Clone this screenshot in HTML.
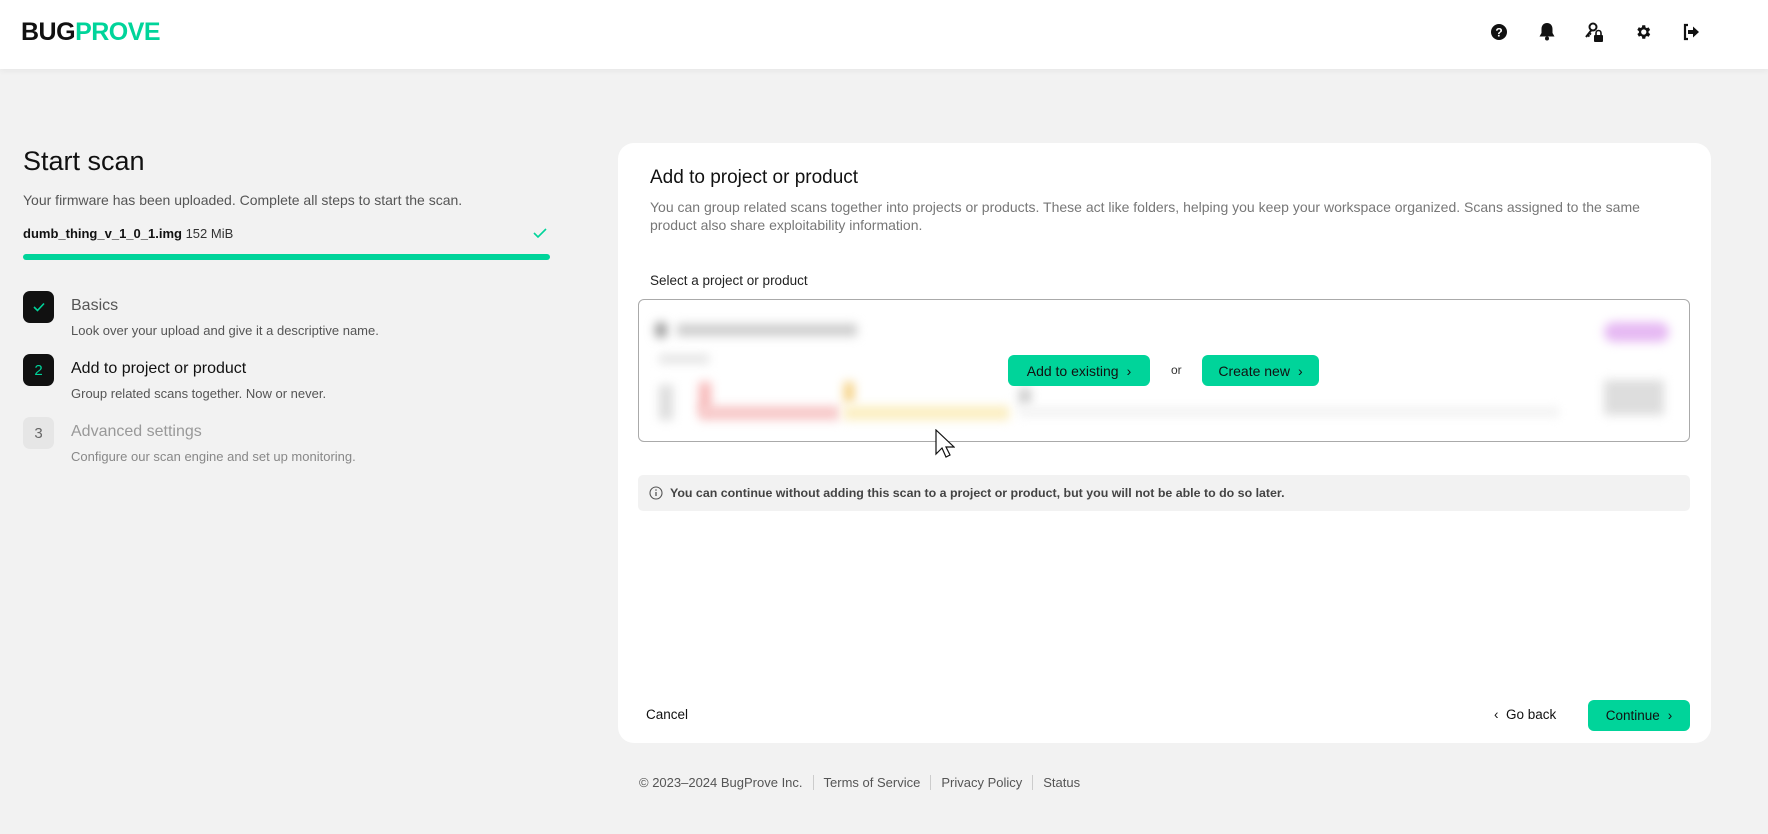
<!DOCTYPE html>
<html><head><meta charset="utf-8"><style>
*{margin:0;padding:0;box-sizing:border-box}
body{width:1768px;height:834px;background:#f2f2f2;font-family:"Liberation Sans",sans-serif;color:#111;position:relative;overflow:hidden}
.a{position:absolute;white-space:nowrap}
.hdr{position:absolute;left:0;top:0;width:1768px;height:69px;background:#fff;box-shadow:0 2px 6px rgba(0,0,0,.05)}
.card{position:absolute;left:618px;top:143px;width:1093px;height:600px;background:#fff;border-radius:16px}
.btn{position:absolute;background:#00d49a;border-radius:6px;font-size:14px;color:#111;display:flex;align-items:center;justify-content:center;gap:8px}
.box{position:absolute;left:23px;width:31px;height:32px;border-radius:7px;display:flex;align-items:center;justify-content:center;font-size:15px}
.st{font-size:16px;color:#555}
.sd{font-size:13px;color:#555}
.bl{position:absolute;filter:blur(5px)}
</style></head><body>
<div class="hdr">
<div class="a" style="left:21px;top:18px;font-size:25px;font-weight:bold;letter-spacing:-0.5px;line-height:28px"><span style="color:#111">BUG</span><span style="color:#00d49a">PROVE</span></div>
<svg class="a" style="left:1490px;top:23px" width="18" height="18" viewBox="0 0 18 18"><circle cx="9" cy="9" r="8" fill="#111"/><text x="9" y="13.5" font-size="12" font-weight="bold" fill="#fff" text-anchor="middle" font-family="Liberation Sans">?</text></svg>
<svg class="a" style="left:1538px;top:22px" width="18" height="20" viewBox="0 0 18 20"><path d="M9 1c-3.5 0-5.5 2.5-5.5 6v4L1.5 14.5h15L14.5 11V7C14.5 3.5 12.5 1 9 1z" fill="#111"/><circle cx="9" cy="16.5" r="2" fill="#111"/></svg>
<svg class="a" style="left:1584px;top:22px" width="20" height="20" viewBox="0 0 20 20"><circle cx="9" cy="5" r="3.5" fill="none" stroke="#111" stroke-width="2"/><path d="M7.5 8L2 15M3.5 13l2 1.5M5 11l2 1.5" stroke="#111" stroke-width="2" fill="none"/><rect x="10" y="13" width="9" height="7" rx="1" fill="#111"/><path d="M12 13v-2a2.5 2.5 0 015 0v2" stroke="#111" stroke-width="1.6" fill="none"/></svg>
<svg class="a" style="left:1634px;top:23px" width="18" height="18" viewBox="0 0 24 24"><path fill="#111" d="M19.4 13a7.5 7.5 0 000-2l2.1-1.6-2-3.5-2.5 1a7.5 7.5 0 00-1.7-1L15 3h-4l-.4 2.7a7.5 7.5 0 00-1.7 1l-2.5-1-2 3.5L6.6 11a7.5 7.5 0 000 2l-2.1 1.6 2 3.5 2.5-1a7.5 7.5 0 001.7 1L11 21h4l.4-2.7a7.5 7.5 0 001.7-1l2.5 1 2-3.5zM13 15.5a3.5 3.5 0 110-7 3.5 3.5 0 010 7z"/></svg>
<svg class="a" style="left:1682px;top:23px" width="18" height="18" viewBox="0 0 18 18"><path d="M6 2H3v14h3" stroke="#111" stroke-width="2.2" fill="none"/><path d="M6 7h5V3.5L17 9l-6 5.5V11H6z" fill="#111"/></svg>
</div>

<div class="a" style="left:23px;top:146px;font-size:27px;color:#111">Start scan</div>
<div class="a" style="left:23px;top:192px;font-size:14px;color:#555">Your firmware has been uploaded. Complete all steps to start the scan.</div>
<div class="a" style="left:23px;top:226px;font-size:13px"><b style="font-weight:600">dumb_thing_v_1_0_1.img</b> <span style="color:#333">152 MiB</span></div>
<svg class="a" style="left:533px;top:227px" width="14" height="12" viewBox="0 0 14 12"><path d="M1 6l4 4 8-8" stroke="#00d49a" stroke-width="1.6" fill="none"/></svg>
<div class="a" style="left:23px;top:254px;width:527px;height:6px;border-radius:3px;background:#00d49a"></div>

<div class="box" style="top:291px;background:#111"><svg width="12" height="10" viewBox="0 0 12 10"><path d="M1 5l3.5 3.5L11 1.5" stroke="#00d49a" stroke-width="1.6" fill="none"/></svg></div>
<div class="a st" style="left:71px;top:297px">Basics</div>
<div class="a sd" style="left:71px;top:323px">Look over your upload and give it a descriptive name.</div>
<div class="box" style="top:354px;background:#111;color:#00d49a">2</div>
<div class="a st" style="left:71px;top:360px;color:#111">Add to project or product</div>
<div class="a sd" style="left:71px;top:386px">Group related scans together. Now or never.</div>
<div class="box" style="top:417px;background:#e6e6e6;color:#666">3</div>
<div class="a st" style="left:71px;top:423px;color:#999">Advanced settings</div>
<div class="a sd" style="left:71px;top:449px;color:#888">Configure our scan engine and set up monitoring.</div>

<div class="card"></div>
<div class="a" style="left:650px;top:167px;font-size:19px;color:#111">Add to project or product</div>
<div class="a" style="left:650px;top:198px;font-size:14px;color:#777;line-height:18px;white-space:normal;width:1030px">You can group related scans together into projects or products. These act like folders, helping you keep your workspace organized. Scans assigned to the same product also share exploitability information.</div>
<div class="a" style="left:650px;top:273px;font-size:13.5px;color:#222">Select a project or product</div>
<div class="a" style="left:638px;top:299px;width:1052px;height:143px;border:1px solid #aaa;border-radius:6px;overflow:hidden;background:#fff">
<div class="bl" style="left:16px;top:22px;width:12px;height:16px;background:#999;border-radius:6px"></div>
<div class="bl" style="left:38px;top:24px;width:180px;height:12px;background:#ccc"></div>
<div class="bl" style="left:20px;top:55px;width:50px;height:8px;background:#e0e0e0"></div>
<div class="bl" style="left:20px;top:85px;width:14px;height:35px;background:#ddd"></div>
<div class="bl" style="left:60px;top:82px;width:12px;height:30px;background:#f7b8b8"></div>
<div class="bl" style="left:60px;top:106px;width:140px;height:14px;background:#f7c7c7"></div>
<div class="bl" style="left:205px;top:82px;width:10px;height:20px;background:#f5d080"></div>
<div class="bl" style="left:205px;top:106px;width:165px;height:14px;background:#fbeec0"></div>
<div class="bl" style="left:380px;top:88px;width:12px;height:16px;background:#ccc"></div>
<div class="bl" style="left:380px;top:108px;width:540px;height:8px;background:#f0f0f0"></div>
<div class="bl" style="left:965px;top:22px;width:65px;height:20px;background:#e6b9f3;border-radius:10px"></div>
<div class="bl" style="left:965px;top:80px;width:60px;height:35px;background:#ddd"></div>
</div>
<div class="btn" style="left:1008px;top:355px;width:142px;height:31px">Add to existing <span>›</span></div>
<div class="a" style="left:1171px;top:363px;font-size:12px;color:#333">or</div>
<div class="btn" style="left:1202px;top:355px;width:117px;height:31px">Create new <span>›</span></div>
<div class="a" style="left:935px;top:429px"><svg width="20" height="30" viewBox="0 0 20 30"><path d="M1 1v24l6-6 4 9 4-2-4-8h8z" fill="#fff" stroke="#111" stroke-width="1.2"/></svg></div>
<div class="a" style="left:638px;top:475px;width:1052px;height:36px;background:#f2f2f2;border-radius:5px"></div>
<svg class="a" style="left:649px;top:486px" width="14" height="14" viewBox="0 0 14 14"><circle cx="7" cy="7" r="6" fill="none" stroke="#555" stroke-width="1.1"/><path d="M7 6v4" stroke="#555" stroke-width="1.3"/><circle cx="7" cy="4" r=".8" fill="#555"/></svg>
<div class="a" style="left:670px;top:486px;font-size:12.4px;color:#444;font-weight:600">You can continue without adding this scan to a project or product, but you will not be able to do so later.</div>

<div class="a" style="left:646px;top:707px;font-size:13.5px;color:#111">Cancel</div>
<div class="a" style="left:1494px;top:707px;font-size:13.5px;color:#111">‹&nbsp;&nbsp;Go back</div>
<div class="btn" style="left:1588px;top:700px;width:102px;height:31px;font-size:13.5px">Continue <span>›</span></div>

<div class="a" style="left:639px;top:775px;font-size:13px;color:#555">© 2023–2024 BugProve Inc.<span style="border-left:1px solid #ccc;margin:0 10px;padding-left:10px">Terms of Service</span><span style="border-left:1px solid #ccc;padding-left:10px;margin-right:10px">Privacy Policy</span><span style="border-left:1px solid #ccc;padding-left:10px">Status</span></div>
</body></html>
